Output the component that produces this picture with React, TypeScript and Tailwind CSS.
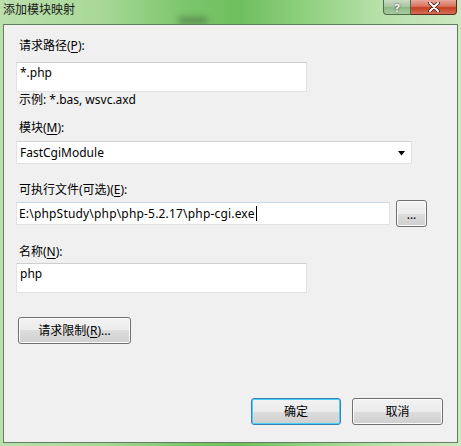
import React from "react";

const font = {
  fontFamily: '"Segoe UI", "Noto Sans", "Noto Sans CJK SC", sans-serif',
};

function U({ c }: { c: string }) {
  return <span className="underline underline-offset-[2px] decoration-[1px]">{c}</span>;
}

function WinButton({
  children,
  className = "",
  focused = false,
}: {
  children: React.ReactNode;
  className?: string;
  focused?: boolean;
}) {
  return (
    <div
      className={`h-[27px] rounded-[3px] border ${
        focused ? "border-[#3c7fb1]" : "border-[#707070]"
      } flex items-center justify-center text-[12px] text-black ${className}`}
      style={{
        background: "linear-gradient(to bottom, #f2f2f2 0%, #ebebeb 50%, #dddddd 50%, #cfcfcf 100%)",
        boxShadow: focused ? "inset 0 0 0 1px #48d0f8" : "inset 0 0 0 1px #fcfcfc",
      }}
    >
      {children}
    </div>
  );
}

export default function App() {
  return (
    <div
      className="relative w-[461px] h-[446px] overflow-hidden flex flex-col"
      style={{
        ...font,
        background:
          "linear-gradient(to right, #bcdfae 0%, #a8d898 22%, #7cc66b 40%, #6ebf5e 52%, #8fd07f 66%, #b7e0a8 82%, #cde9c2 100%)",
      }}
    >
      {/* title bar */}
      <div className="h-[24px] flex items-start shrink-0">
        <div className="pl-[3px] pt-[1px] text-[12px] leading-[18px] text-[#1a1a1a]">添加模块映射</div>
        <div className="flex-1" />
        <div className="flex mr-[4px]">
          <div
            className="w-[28px] h-[15px] rounded-bl-[4px] border border-t-0 border-[#4d6b4d] flex items-center justify-center text-[11px] font-bold text-white leading-none"
            style={{
              background: "linear-gradient(to bottom, #c9dcc3 0%, #a7c49d 50%, #8fb585 51%, #a9cda0 100%)",
              textShadow: "0 0 2px #223",
            }}
          >
            ?
          </div>
          <div
            className="w-[46px] h-[15px] rounded-br-[4px] border border-t-0 border-l-0 border-[#5a2a20] flex items-center justify-center"
            style={{
              background: "linear-gradient(to bottom, #e9a99b 0%, #d9735f 45%, #c4411f 55%, #d5705a 100%)",
            }}
          >
            <svg width="12" height="10" viewBox="0 0 12 10">
              <path d="M2 1 L10 9 M10 1 L2 9" stroke="#3a1a14" strokeWidth="3.6" strokeLinecap="round" />
              <path d="M2 1 L10 9 M10 1 L2 9" stroke="#ffffff" strokeWidth="2" strokeLinecap="round" />
            </svg>
          </div>
        </div>
      </div>
      {/* smudge */}
      <div className="absolute left-[178px] top-[17px] w-[30px] h-[7px] rounded-full bg-[#3d5a3d] opacity-50 blur-[3px]" />

      {/* client area */}
      <div className="ml-[3px] w-[455px] h-[419px] border border-[#5f7f5f] bg-[#f0f0f0] flex flex-col text-[12px] text-black relative">
        <div className="flex flex-col pl-[12px] pt-[13px]">
          <div className="h-[16px] leading-[16px] pl-[3px]">
            请求路径(<U c="P" />):
          </div>
          <div className="mt-[8px] w-[291px] h-[30px] bg-white border border-[#e2e2e2] border-t-[#cfcfcf] pl-[3px] pt-[2px] leading-[16px]">
            *.php
          </div>
          <div className="h-[16px] leading-[16px] pl-[3px]">示例: *.bas, wsvc.axd</div>
          <div className="mt-[12px] h-[16px] leading-[16px] pl-[3px]">
            模块(<U c="M" />):
          </div>
          <div className="mt-[5px] w-[396px] h-[23px] bg-white border border-[#e2e2e2] border-t-[#d4d4d4] flex items-center pl-[3px] pr-[4px]">
            <span className="flex-1 leading-[16px]">FastCgiModule</span>
            <svg width="8" height="5" viewBox="0 0 8 5" className="mr-[1px] mt-[1px]">
              <path d="M0 0 H7 L3.5 4.5 Z" fill="#000" />
            </svg>
          </div>
          <div className="mt-[18px] h-[16px] leading-[16px] pl-[3px]">
            可执行文件(可选)(<U c="E" />):
          </div>
          <div className="mt-[2px] flex items-center gap-[6px]">
            <div className="w-[374px] h-[23px] bg-white border border-[#e2e2e2] border-t-[#c9d7e3] flex items-center pl-[2px]">
              <span className="leading-[16px] tracking-[0.18px]">E:\phpStudy\php\php-5.2.17\php-cgi.exe</span>
              <span className="w-[1px] h-[15px] bg-black ml-[1px]" />
            </div>
            <WinButton className="w-[31px]">
              <span className="leading-none pt-[2px]">...</span>
            </WinButton>
          </div>
          <div className="mt-[17px] h-[16px] leading-[16px] pl-[3px]">
            名称(<U c="N" />):
          </div>
          <div className="mt-[3px] w-[291px] h-[30px] bg-white border border-[#e2e2e2] border-t-[#cfcfcf] pl-[3px] pt-[2px] leading-[16px]">
            php
          </div>
          <div className="mt-[24px] pl-[2px]">
            <WinButton className="w-[113px]">
              请求限制(<U c="R" />)...
            </WinButton>
          </div>
        </div>
        <div className="mt-[54px] flex justify-end gap-[11px] pr-[14px]">
          <WinButton className="w-[90px]" focused>
            确定
          </WinButton>
          <WinButton className="w-[91px]">取消</WinButton>
        </div>
      </div>
    </div>
  );
}
